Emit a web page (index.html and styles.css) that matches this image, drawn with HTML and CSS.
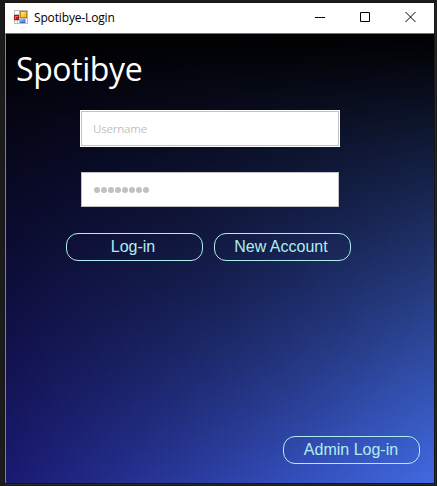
FILE: index.html
```html
<!DOCTYPE html>
<html lang="en">
<head>
<meta charset="utf-8">
<title>Spotibye-Login</title>
<link rel="stylesheet" href="styles.css">
</head>
<body>
<div class="window">
  <header class="titlebar">
    <svg class="app-icon" width="14" height="14" viewBox="0 0 14 14" shape-rendering="crispEdges">
      <defs>
        <linearGradient id="gold" x1="0" y1="0" x2="1" y2="1"><stop offset="0" stop-color="#ffeb96"/><stop offset="1" stop-color="#f2b000"/></linearGradient>
        <linearGradient id="blue" x1="0" y1="0" x2="1" y2="1"><stop offset="0" stop-color="#9cc5ff"/><stop offset="1" stop-color="#3f78dc"/></linearGradient>
      </defs>
      <path fill="#bdbdbd" d="M0 0h14v14H0z"/>
      <path fill="#fff" d="M1 1h4v3H1zM1 11h2v2H1zM4 11h1v2H4zM12 9h1v4h-1z"/>
      <path fill="#a81818" d="M0 5h5v5H0z"/>
      <path fill="#e0705c" d="M1 6h3v3H1z"/>
      <path fill="#b81c14" d="M2 7h2v2H2z"/>
      <path fill="#b98a10" d="M6 1h7v7H6z"/>
      <path fill="url(#gold)" d="M7 2h5v5H7z"/>
      <path fill="#3a68b8" d="M6 9h5v4H6z"/>
      <path fill="url(#blue)" d="M6 9h5v3H6z"/>
    </svg>
    <span class="caption">Spotibye-Login</span>
    <div class="controls">
      <svg width="10" height="10" viewBox="0 0 10 10"><path d="M0 5.5h10"/></svg>
      <svg width="10" height="10" viewBox="0 0 10 10"><path d="M.5.5h9v9h-9z"/></svg>
      <svg class="close" width="11" height="10" viewBox="0 0 11 10"><path d="M.5 0l10 10M10.500 0l-10 10"/></svg>
    </div>
  </header>
  <main class="client">
    <h1 class="brand">Spotibye</h1>
    <form class="fields">
      <div class="field focused"><span class="placeholder">Username</span></div>
      <div class="field"><span class="dots"><i></i><i></i><i></i><i></i><i></i><i></i><i></i><i></i></span></div>
    </form>
    <div class="actions">
      <button class="btn"><span class="label">Log-in</span></button>
      <button class="btn"><span class="label">New Account</span></button>
    </div>
    <footer class="footer">
      <button class="btn"><span class="label admin">Admin Log-in</span></button>
    </footer>
  </main>
</div>
</body>
</html>
```
FILE: styles.css
```css
* { box-sizing: border-box; }

body {
  margin: 0;
  width: 437px;
  height: 486px;
  padding: 3px 3px 3px 5px;
  background: #1b1b1b;
  overflow: hidden;
}

.window {
  width: 429px;
  height: 480px;
  display: flex;
  flex-direction: column;
  box-shadow: 0 0 0 1px #151515, 1px 1px 0 1px #29292a;
}

.titlebar {
  height: 30px;
  flex: none;
  display: flex;
  align-items: center;
  padding: 0 18px 0 9px;
  background: #fff;
}

.app-icon { display: block; margin-top: -2px; }

.caption {
  margin-left: 6px;
  font: 12px/16px "Open Sans", "Noto Sans", sans-serif;
  letter-spacing: -0.15px;
  color: #000;
}

.controls {
  margin-left: auto;
  margin-top: -2px;
  display: flex;
  gap: 35px;
}

.controls svg {
  display: block;
  fill: none;
  stroke: #000;
  stroke-width: 1;
}

.client {
  flex: 1;
  display: flex;
  flex-direction: column;
  border-top: 1px solid #6f7675;
  border-left: 1px solid #80828f;
  background:
    radial-gradient(ellipse 60% 55% at 42% 48%, rgba(0, 0, 0, 0.16), transparent),
    linear-gradient(to bottom, #000, transparent),
    linear-gradient(to right, #191970, #4169e1);
  background-clip: padding-box;
}

.brand {
  margin: 13px 0 0 10px;
  font: 400 32px/44px "Open Sans", "Noto Sans", sans-serif;
  letter-spacing: -0.4px;
  color: #fff;
}

.fields {
  margin: 20px 0 0 75px;
  display: flex;
  flex-direction: column;
  gap: 26px;
}

.field {
  width: 258px;
  height: 35px;
  display: flex;
  align-items: center;
  padding-left: 11px;
  background: #fff;
  border: 1px solid #c1c1c1;
}

.focused { box-shadow: 0 0 0 1px #fff; }

.placeholder {
  font: 11.5px/16px "Open Sans", "Noto Sans", sans-serif;
  letter-spacing: -0.2px;
  color: #c1c1c1;
}

.dots { display: flex; gap: 1px; padding-left: 1px; }

.dots i {
  width: 6px;
  height: 6px;
  border-radius: 50%;
  background: #c1c1c1;
}

.actions {
  margin: 26px 0 0 60px;
  display: flex;
  gap: 11px;
}

.btn {
  width: 137px;
  height: 28px;
  padding: 0;
  border: 1px solid #afeeee;
  border-radius: 12px;
  background: none;
  font: 16px/18px "Liberation Sans", Arial, sans-serif;
  color: #afeeee;
}

.label { display: block; margin-right: 3px; }

.admin { margin-right: 1px; }

.footer {
  margin: auto 14px 19px 0;
  display: flex;
  justify-content: flex-end;
}
```
